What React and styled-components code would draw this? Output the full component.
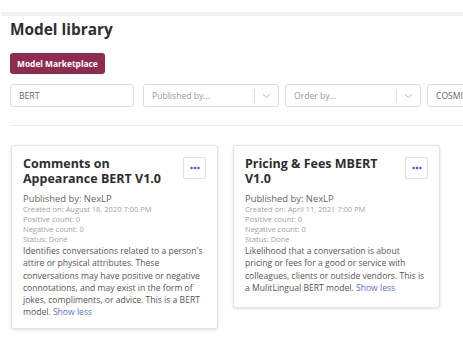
import React from "react";
import styled, { createGlobalStyle } from "styled-components";

const Global = createGlobalStyle`
  html, body { margin: 0; padding: 0; background: #fff; }
  body { font-family: "Open Sans", "Liberation Sans", sans-serif; color: #333; overflow: hidden; }
  * { box-sizing: border-box; }
`;

const Page = styled.div`
  width: 463px;
  height: 341px;
  overflow: hidden;
  padding-top: 12px;
`;

const TopStrip = styled.div`
  height: 4px;
  margin-left: 1px;
  background: #f2f2f2;
`;

const Content = styled.div`
  padding: 0 0 0 10px;
`;

const Title = styled.h1`
  margin: 0;
  padding-top: 3px;
  font-size: 15.4px;
  line-height: 22px;
  font-weight: 700;
  color: #2e2e2e;
  white-space: nowrap;
`;

const PrimaryButton = styled.button`
  margin-top: 12px;
  height: 21px;
  padding: 0 7px;
  border: none;
  border-radius: 3px;
  background: #8e2c50;
  color: #fff;
  font-family: inherit;
  font-weight: 700;
  font-size: 8.4px;
  display: flex;
  align-items: center;
`;

const FilterRow = styled.div`
  margin-top: 10px;
  display: flex;
  gap: 6px;
  white-space: nowrap;
`;

const TextInput = styled.div`
  flex: 0 0 ${(p) => p.$w}px;
  height: 23px;
  border: 1px solid #dcdcdc;
  border-radius: 3px;
  padding: 0 8px;
  display: flex;
  align-items: center;
  font-size: 8.6px;
  color: ${(p) => (p.$value ? "#666" : "#9a9a9a")};
  margin-right: ${(p) => p.$mr || 0}px;
  overflow: hidden;
`;

const Select = styled.div`
  flex: 0 0 136px;
  height: 23px;
  border: 1px solid #dcdcdc;
  border-radius: 3px;
  display: flex;
  align-items: center;
  font-size: 8.6px;
  color: #9a9a9a;
`;

const SelectText = styled.div`
  flex: 1;
  padding-left: 8px;
`;

const Divider = styled.div`
  width: 1px;
  height: 14px;
  background: #dcdcdc;
`;

const Chevron = styled.div`
  width: 23px;
  display: flex;
  align-items: center;
  justify-content: center;
`;

const Rule = styled.div`
  margin-top: 18px;
  height: 1px;
  background: #ececec;
`;

const Cards = styled.div`
  margin-top: 19px;
  margin-left: 1px;
  display: flex;
  align-items: flex-start;
  gap: 15px;
`;

const Card = styled.div`
  width: 207px;
  min-height: ${(p) => p.$minH || 0}px;
  border: 1px solid #e3e3e3;
  border-radius: 3px;
  background: #fff;
  box-shadow: 0 1px 3px rgba(0, 0, 0, 0.12);
  padding: 10px 11px 9px 11px;
`;

const CardHeader = styled.div`
  display: flex;
  justify-content: space-between;
  align-items: flex-start;
  gap: 8px;
`;

const CardTitle = styled.h2`
  margin: 0;
  font-size: 12.5px;
  line-height: 15px;
  font-weight: 700;
  color: #2e2e2e;
`;

const MoreButton = styled.button`
  flex: 0 0 23px;
  height: 22px;
  margin-top: 1px;
  padding: 0;
  border: 1px solid #e0e0e0;
  border-radius: 2px;
  background: #fff;
  display: flex;
  align-items: center;
  justify-content: center;
`;

const Publisher = styled.div`
  margin-top: 7px;
  font-size: 9.4px;
  line-height: 11px;
  color: #666;
`;

const Meta = styled.div`
  font-size: 7.5px;
  line-height: 10px;
  color: #a3a3a3;
`;

const Description = styled.p`
  margin: 1px 0 0;
  font-size: 8.6px;
  line-height: 12.3px;
  color: #555;
`;

const ShowLess = styled.a`
  color: #5b6fcf;
  text-decoration: none;
`;

const Dots = () => (
  <svg width="10" height="4" viewBox="0 0 10 4">
    <circle cx="1.6" cy="2" r="1.3" fill="#4c5fc4" />
    <circle cx="5" cy="2" r="1.3" fill="#4c5fc4" />
    <circle cx="8.4" cy="2" r="1.3" fill="#4c5fc4" />
  </svg>
);

const ChevronIcon = () => (
  <svg width="9" height="6" viewBox="0 0 9 6">
    <path d="M1 1.2 L4.5 4.5 L8 1.2" fill="none" stroke="#b8b8b8" strokeWidth="1" />
  </svg>
);

const models = [
  {
    title: "Comments on Appearance BERT V1.0",
    created: "August 18, 2020 7:00 PM",
    desc:
      "Identifies conversations related to a person's attire or physical attributes. These conversations may have positive or negative connotations, and may exist in the form of jokes, compliments, or advice. This is a BERT model.",
    minH: 0,
  },
  {
    title: "Pricing & Fees MBERT V1.0",
    created: "April 11, 2021 7:00 PM",
    desc:
      "Likelihood that a conversation is about pricing or fees for a good or service with colleagues, clients or outside vendors. This is a MulitLingual BERT model.",
    minH: 163,
  },
];

export default function App() {
  return (
    <Page>
      <Global />
      <TopStrip />
      <Content>
        <Title>Model library</Title>
        <PrimaryButton>Model Marketplace</PrimaryButton>
        <FilterRow>
          <TextInput $w={124} $value $mr={3}>BERT</TextInput>
          <Select>
            <SelectText>Published by...</SelectText>
            <Divider />
            <Chevron><ChevronIcon /></Chevron>
          </Select>
          <Select>
            <SelectText>Order by...</SelectText>
            <Divider />
            <Chevron><ChevronIcon /></Chevron>
          </Select>
          <TextInput $w={80} $value>COSMIC</TextInput>
        </FilterRow>
        <Rule />
        <Cards>
          {models.map((m) => (
            <Card key={m.title} $minH={m.minH}>
              <CardHeader>
                <CardTitle>{m.title}</CardTitle>
                <MoreButton><Dots /></MoreButton>
              </CardHeader>
              <Publisher>Published by: NexLP</Publisher>
              <Meta>Created on: {m.created}</Meta>
              <Meta>Positive count: 0</Meta>
              <Meta>Negative count: 0</Meta>
              <Meta>Status: Done</Meta>
              <Description>
                {m.desc} <ShowLess href="#">Show less</ShowLess>
              </Description>
            </Card>
          ))}
        </Cards>
      </Content>
    </Page>
  );
}
